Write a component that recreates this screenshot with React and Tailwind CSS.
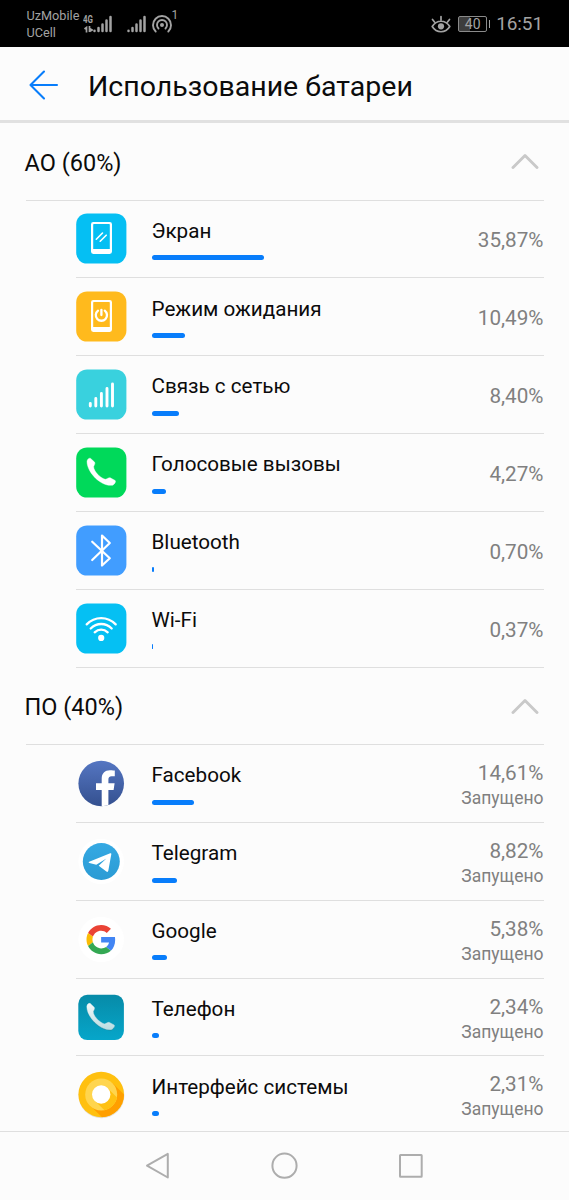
import React from "react";

const PHONE =
  "M29.5 36.3C30 33.4 32.3 31.2 34.6 32.3L40.2 37.6C41.7 39.6 39.6 42.2 38.9 44C38.7 50 47.5 60 55.5 62.2C58 61.8 60.4 59.2 62.6 60L69.6 63.8C71.3 65.3 68.6 69.4 66.2 70.5C50 73.5 29 52 29.5 36.3Z";

function Tile({ fill, children }) {
  return (
    <svg viewBox="0 0 51 51" className="h-[51px] w-[51px]">
      <rect x="0.2" y="0.4" width="50.2" height="50.2" rx="11" fill={fill} />
      {children}
    </svg>
  );
}

function Handset() {
  return (
    <path
      fillRule="evenodd"
      fill="#fff"
      d="M17.3 8.9h16.400a2.300 2.300 0 0 1 2.300 2.300v27.400a2.300 2.300 0 0 1-2.300 2.300H17.300a2.300 2.300 0 0 1-2.300-2.300V11.200a2.300 2.300 0 0 1 2.300-2.300ZM17.900 10.900a.7.7 0 0 0-.7.7v24.300h16.600V11.600a.7.7 0 0 0-.7-.7Z"
    />
  );
}

function ScreenIcon() {
  return (
    <Tile fill="#05bff3">
      <Handset />
      <path d="M20.300 26.200l6.200-6.200M24.200 28.200l6-6" stroke="#fff" strokeWidth="1.600" strokeLinecap="round" />
    </Tile>
  );
}

function StandbyIcon() {
  return (
    <Tile fill="#ffba1d">
      <Handset />
      <path d="M22 19.700a5.600 5.600 0 1 0 6.800 0M25.400 18.800v5.200" fill="none" stroke="#fff" strokeWidth="2.300" strokeLinecap="round" />
    </Tile>
  );
}

function NetworkIcon() {
  return (
    <Tile fill="#39d1de">
      <path d="M14.300 34.500v2.600M19.800 29.500v7.600M25.400 24.500v12.600M31 19.500v17.600M36.500 15v22.100" stroke="#fff" strokeWidth="2.900" strokeLinecap="round" />
    </Tile>
  );
}

function CallIcon() {
  return (
    <Tile fill="#00d95a">
      <path transform="translate(-9.600 -11.200) scale(0.700)" fill="#fff" stroke="#fff" strokeWidth="0.600" d={PHONE} />
    </Tile>
  );
}

function BluetoothIcon() {
  return (
    <Tile fill="#419dff">
      <path d="M16.200 16.700L33.800 33.300L26 40.500V10.500L33.800 18L16.200 35" fill="none" stroke="#fff" strokeWidth="2.200" strokeLinecap="round" strokeLinejoin="round" />
    </Tile>
  );
}

function WifiIcon() {
  return (
    <Tile fill="#05c0f3">
      <g fill="none" stroke="#fff" strokeWidth="2.300" strokeLinecap="round">
        <path d="M10.700 21.400c8.200-8.400 20.800-8.400 29 0" />
        <path d="M14.700 25.500c6-6 15-6 21 0" />
        <path d="M18.700 29.300c3.800-3.600 9.200-3.600 13 0" />
      </g>
      <circle cx="25.200" cy="34.900" r="3.100" fill="#fff" />
    </Tile>
  );
}

function FacebookIcon() {
  return (
    <svg viewBox="0 0 51 51" className="h-[51px] w-[51px]">
      <defs>
        <linearGradient id="fb" x1="0" y1="0" x2="0" y2="1">
          <stop offset="0" stopColor="#5576c2" />
          <stop offset="1" stopColor="#34508f" />
        </linearGradient>
        <clipPath id="fbClip">
          <circle cx="25.200" cy="25.500" r="22.800" />
        </clipPath>
      </defs>
      <circle cx="25.200" cy="25.500" r="22.800" fill="url(#fb)" />
      <path clipPath="url(#fbClip)" fill="#fff" d="M25.700 49V32H20v-6.700h5.700v-4.600c0-5.500 3.200-8.500 8.200-8.500 2.300 0 4.900.4 4.900.4v5.600h-3.100c-2.600 0-3.300 1.500-3.300 3.200v3.900h6.200l-1 6.700h-5.200V49Z" />
    </svg>
  );
}

function TelegramIcon() {
  return (
    <svg viewBox="0 0 51 51" className="h-[51px] w-[51px]">
      <defs>
        <linearGradient id="tg" x1="0" y1="0" x2="0" y2="1">
          <stop offset="0" stopColor="#35a9e3" />
          <stop offset="1" stopColor="#2b9bd4" />
        </linearGradient>
      </defs>
      <circle cx="25.200" cy="25.500" r="22.800" fill="#fff" />
      <circle cx="25.300" cy="25.500" r="18.500" fill="url(#tg)" />
      <path fill="#fff" d="M13.200 25.800L34.200 17.300c.7-.3 1.300.1 1.100 1l-3 16.500c-.2 1.200-1 1.400-1.900.8l-7.700-5.800 7.700-7.400-10.100 6.300-6.900-1.800c-1-.3-1.100-.8-.2-1.100Z" />
    </svg>
  );
}

function GoogleIcon() {
  return (
    <svg viewBox="0 0 51 51" className="h-[51px] w-[51px]">
      <circle cx="25.200" cy="25.500" r="22.800" fill="#fff" />
      <g transform="translate(10.500 10.900) scale(0.610)">
        <path fill="#ea4335" d="M24 9.500c3.540 0 6.710 1.220 9.210 3.600l6.850-6.850C35.900 2.380 30.470 0 24 0 14.620 0 6.510 5.380 2.560 13.220l7.980 6.190C12.430 13.720 17.740 9.500 24 9.500z" />
        <path fill="#4285f4" d="M46.980 24.550c0-1.570-.15-3.090-.38-4.550H24v9.020h12.940c-.58 2.960-2.260 5.480-4.780 7.180l7.730 6c4.510-4.180 7.090-10.360 7.090-17.650z" />
        <path fill="#fbbc05" d="M10.530 28.590c-.48-1.450-.76-2.990-.76-4.590s.27-3.140.76-4.590l-7.980-6.190C.92 16.460 0 20.120 0 24c0 3.880.92 7.540 2.560 10.780l7.970-6.190z" />
        <path fill="#34a853" d="M24 48c6.480 0 11.930-2.130 15.890-5.810l-7.730-6c-2.150 1.450-4.920 2.300-8.160 2.300-6.260 0-11.570-4.220-13.470-9.910l-7.980 6.190C6.510 42.620 14.620 48 24 48z" />
      </g>
    </svg>
  );
}

function PhoneAppIcon() {
  return (
    <svg viewBox="0 0 51 51" className="h-[51px] w-[51px]">
      <defs>
        <linearGradient id="ph" x1="0" y1="0" x2="0" y2="1">
          <stop offset="0" stopColor="#078ba8" />
          <stop offset="1" stopColor="#06a6ca" />
        </linearGradient>
        <linearGradient id="hs" x1="0" y1="0" x2="0" y2="1">
          <stop offset="0" stopColor="#f4f8f8" />
          <stop offset="1" stopColor="#b9dce2" />
        </linearGradient>
      </defs>
      <rect x="2.300" y="2.800" width="45.600" height="45.300" rx="9" fill="url(#ph)" />
      <path transform="translate(-9.200 -9.700) scale(0.680)" fill="#067e98" d={PHONE} />
      <path transform="translate(-9.200 -10.400) scale(0.680)" fill="url(#hs)" stroke="url(#hs)" strokeWidth="0.600" d={PHONE} />
    </svg>
  );
}

function SystemIcon() {
  return (
    <svg viewBox="0 0 51 51" className="h-[51px] w-[51px]">
      <defs>
        <clipPath id="sysClip">
          <circle cx="25.200" cy="25.500" r="22.800" />
        </clipPath>
        <clipPath id="sysInner">
          <circle cx="25.200" cy="25.500" r="16" />
        </clipPath>
      </defs>
      <circle cx="25.500" cy="26.400" r="22.900" fill="#e4e0d6" />
      <circle cx="25.200" cy="25.500" r="22.800" fill="#ffc00f" />
      <path clipPath="url(#sysClip)" fill="#ff9f00" d="M36.500 14L55 32.500V55H33L13.500 36Z" />
      <circle cx="25.200" cy="25.500" r="16" fill="#ffd54e" />
      <path clipPath="url(#sysInner)" fill="#ffc112" d="M31.500 19L50 37.500V50H37.500L18.500 31.500Z" />
      <circle cx="25.200" cy="25.500" r="9.200" fill="#fff" />
    </svg>
  );
}

function Section({ title }) {
  return (
    <div className="mx-[25.500px] flex h-[77.500px] items-center justify-between border-b border-[#dfdfdf] pr-[4.500px]">
      <h2 className="-ml-px pt-[3px] text-[23.500px] leading-7">{title}</h2>
      <svg viewBox="0 0 28 16" className="h-4 w-7" fill="none" stroke="#c9c9c9" strokeWidth="2.900" strokeLinecap="round" strokeLinejoin="round">
        <path d="M2 14.500L14 2.500L26 14.500" />
      </svg>
    </div>
  );
}

function Row({ icon, name, percent, bar, running }) {
  return (
    <li className="ml-[76px] mr-[25.500px] flex h-[77.850px] items-center border-b border-[#dfdfdf]">
      {icon}
      <div className="ml-[24.500px] flex-1 pt-px">
        <p className="text-[20.650px] leading-6">{name}</p>
        <div className="mt-[12.500px] h-[5px] rounded-full bg-[#087dfb]" style={{ width: bar }} />
      </div>
      <div className="pt-[3px] text-right text-[#808080]">
        <p className="text-[20.700px] leading-[26px]">{percent}</p>
        {running && <p className="text-[17.500px] leading-6">Запущено</p>}
      </div>
    </li>
  );
}

const hardware = [
  { name: "Экран", percent: "35,87%", bar: 112.5, icon: <ScreenIcon /> },
  { name: "Режим ожидания", percent: "10,49%", bar: 33, icon: <StandbyIcon /> },
  { name: "Связь с сетью", percent: "8,40%", bar: 27, icon: <NetworkIcon /> },
  { name: "Голосовые вызовы", percent: "4,27%", bar: 14, icon: <CallIcon /> },
  { name: "Bluetooth", percent: "0,70%", bar: 2.5, icon: <BluetoothIcon /> },
  { name: "Wi-Fi", percent: "0,37%", bar: 1.3, icon: <WifiIcon /> },
];

const software = [
  { name: "Facebook", percent: "14,61%", bar: 42, icon: <FacebookIcon /> },
  { name: "Telegram", percent: "8,82%", bar: 25.5, icon: <TelegramIcon /> },
  { name: "Google", percent: "5,38%", bar: 15.5, icon: <GoogleIcon /> },
  { name: "Телефон", percent: "2,34%", bar: 7, icon: <PhoneAppIcon /> },
  { name: "Интерфейс системы", percent: "2,31%", bar: 7, icon: <SystemIcon /> },
];

function Bars() {
  return (
    <svg viewBox="0 0 19 18" className="h-[18px] w-[19px]" stroke="#a3a3a3" strokeWidth="2.500" strokeLinecap="round">
      <path d="M1.500 15.800v.2M5.500 13v3M9.500 9.500v6.500M13.500 5.500v10.500M17.500 2v14" />
    </svg>
  );
}

function StatusBar() {
  return (
    <header className="flex h-[47px] shrink-0 items-center bg-black pl-[26.500px] pr-[26px] text-[#a3a3a3]">
      <div className="w-[56px] pt-px text-[12.700px] leading-[17.500px]">
        <p>UzMobile</p>
        <p>UCell</p>
      </div>
      <div className="flex w-[10px] flex-col text-[11px] font-bold leading-[11px]">
        <span className="origin-left scale-x-[0.720]">4G</span>
        <svg viewBox="0 0 10 7" className="mt-px h-[7px] w-[10px]" fill="none" stroke="#a3a3a3" strokeWidth="1.700">
          <path d="M1.500 3l2-1.500v5M6.500 0v6M6.500 2.500l2.500 1.500l-2.500 1.500" />
        </svg>
      </div>
      <div className="flex items-center">
        <Bars />
        <div className="ml-[15px]"><Bars /></div>
        <svg viewBox="0 0 22 20" className="ml-[5px] h-5 w-[22px]" fill="none" stroke="#a3a3a3" strokeWidth="1.900" strokeLinecap="round">
          <path d="M4.700 17.500a9 9 0 1 1 12.600 0M7.500 14.500a5 5 0 1 1 7 0" />
          <circle cx="11" cy="11" r="2" fill="#a3a3a3" stroke="none" />
        </svg>
        <span className="-ml-px -mt-[18px] text-[12px] leading-3">1</span>
      </div>
      <div className="ml-auto flex items-center">
        <svg viewBox="0 0 20 18" className="h-[18px] w-5" fill="none" stroke="#a3a3a3" strokeWidth="1.700" strokeLinecap="round" strokeLinejoin="round">
          <path d="M1.200 11.500c4.400-7 13.200-7 17.600 0c-4.400 7-13.200 7-17.600 0ZM1.500 4.500l2 2.500M10 1.500v3.500M18.500 4.500l-2 2.500" />
          <circle cx="10" cy="11.300" r="3.100" fill="#a3a3a3" stroke="none" />
        </svg>
        <div className="ml-[7px] flex h-4 w-[29px] items-center justify-center rounded-[2px] border border-[#8a8a8a] bg-linear-to-r from-[#3d3d3d] from-40% to-black to-40% text-[14px] leading-none">
          40
        </div>
        <div className="ml-[1.500px] h-2 w-[1.500px] bg-[#a3a3a3]" />
        <span className="ml-[6px] pt-px text-[19px] leading-6 tracking-[-0.100px]">16:51</span>
      </div>
    </header>
  );
}

export default function App() {
  return (
    <div className="flex h-[1200px] w-[569px] flex-col overflow-hidden bg-[#fcfcfc] font-[Roboto,sans-serif] text-[#0b0b0b]">
      <StatusBar />
      <div className="flex h-[76px] shrink-0 items-center border-b-[3px] border-[#e1e1e1] pl-[29px] pt-[2px]">
        <svg viewBox="0 0 30 30" className="h-[30px] w-[30px]" fill="none" stroke="#087dfb" strokeWidth="2.100" strokeLinecap="round" strokeLinejoin="round">
          <path d="M28 15H1.500M15 1.500L1.500 15L15 28.500" />
        </svg>
        <h1 className="ml-[29px] pt-1 text-[28.500px] leading-8">Использование батареи</h1>
      </div>
      <main className="min-h-0 flex-1 overflow-hidden">
        <Section title="АО (60%)" />
        <ul>
          {hardware.map((item) => (
            <Row key={item.name} {...item} />
          ))}
        </ul>
        <Section title="ПО (40%)" />
        <ul>
          {software.map((item) => (
            <Row key={item.name} {...item} running />
          ))}
        </ul>
      </main>
      <nav className="flex h-[69px] shrink-0 items-center justify-between border-t border-[#dfdfdf] pl-[145px] pr-[145px]">
        <svg viewBox="0 0 26 28" className="h-7 w-[26px]" fill="none" stroke="#adadad" strokeWidth="2" strokeLinejoin="round">
          <path d="M2 13.700L22.800 1.900V25.500Z" />
        </svg>
        <svg viewBox="0 0 28 28" className="h-7 w-7" fill="none" stroke="#adadad" strokeWidth="2">
          <circle cx="13.500" cy="13.700" r="12.100" />
        </svg>
        <svg viewBox="0 0 26 26" className="h-[26px] w-[26px]" fill="none" stroke="#adadad" strokeWidth="2" strokeLinejoin="round">
          <rect x="2" y="2" width="21.700" height="21.700" rx="0.500" />
        </svg>
      </nav>
    </div>
  );
}
